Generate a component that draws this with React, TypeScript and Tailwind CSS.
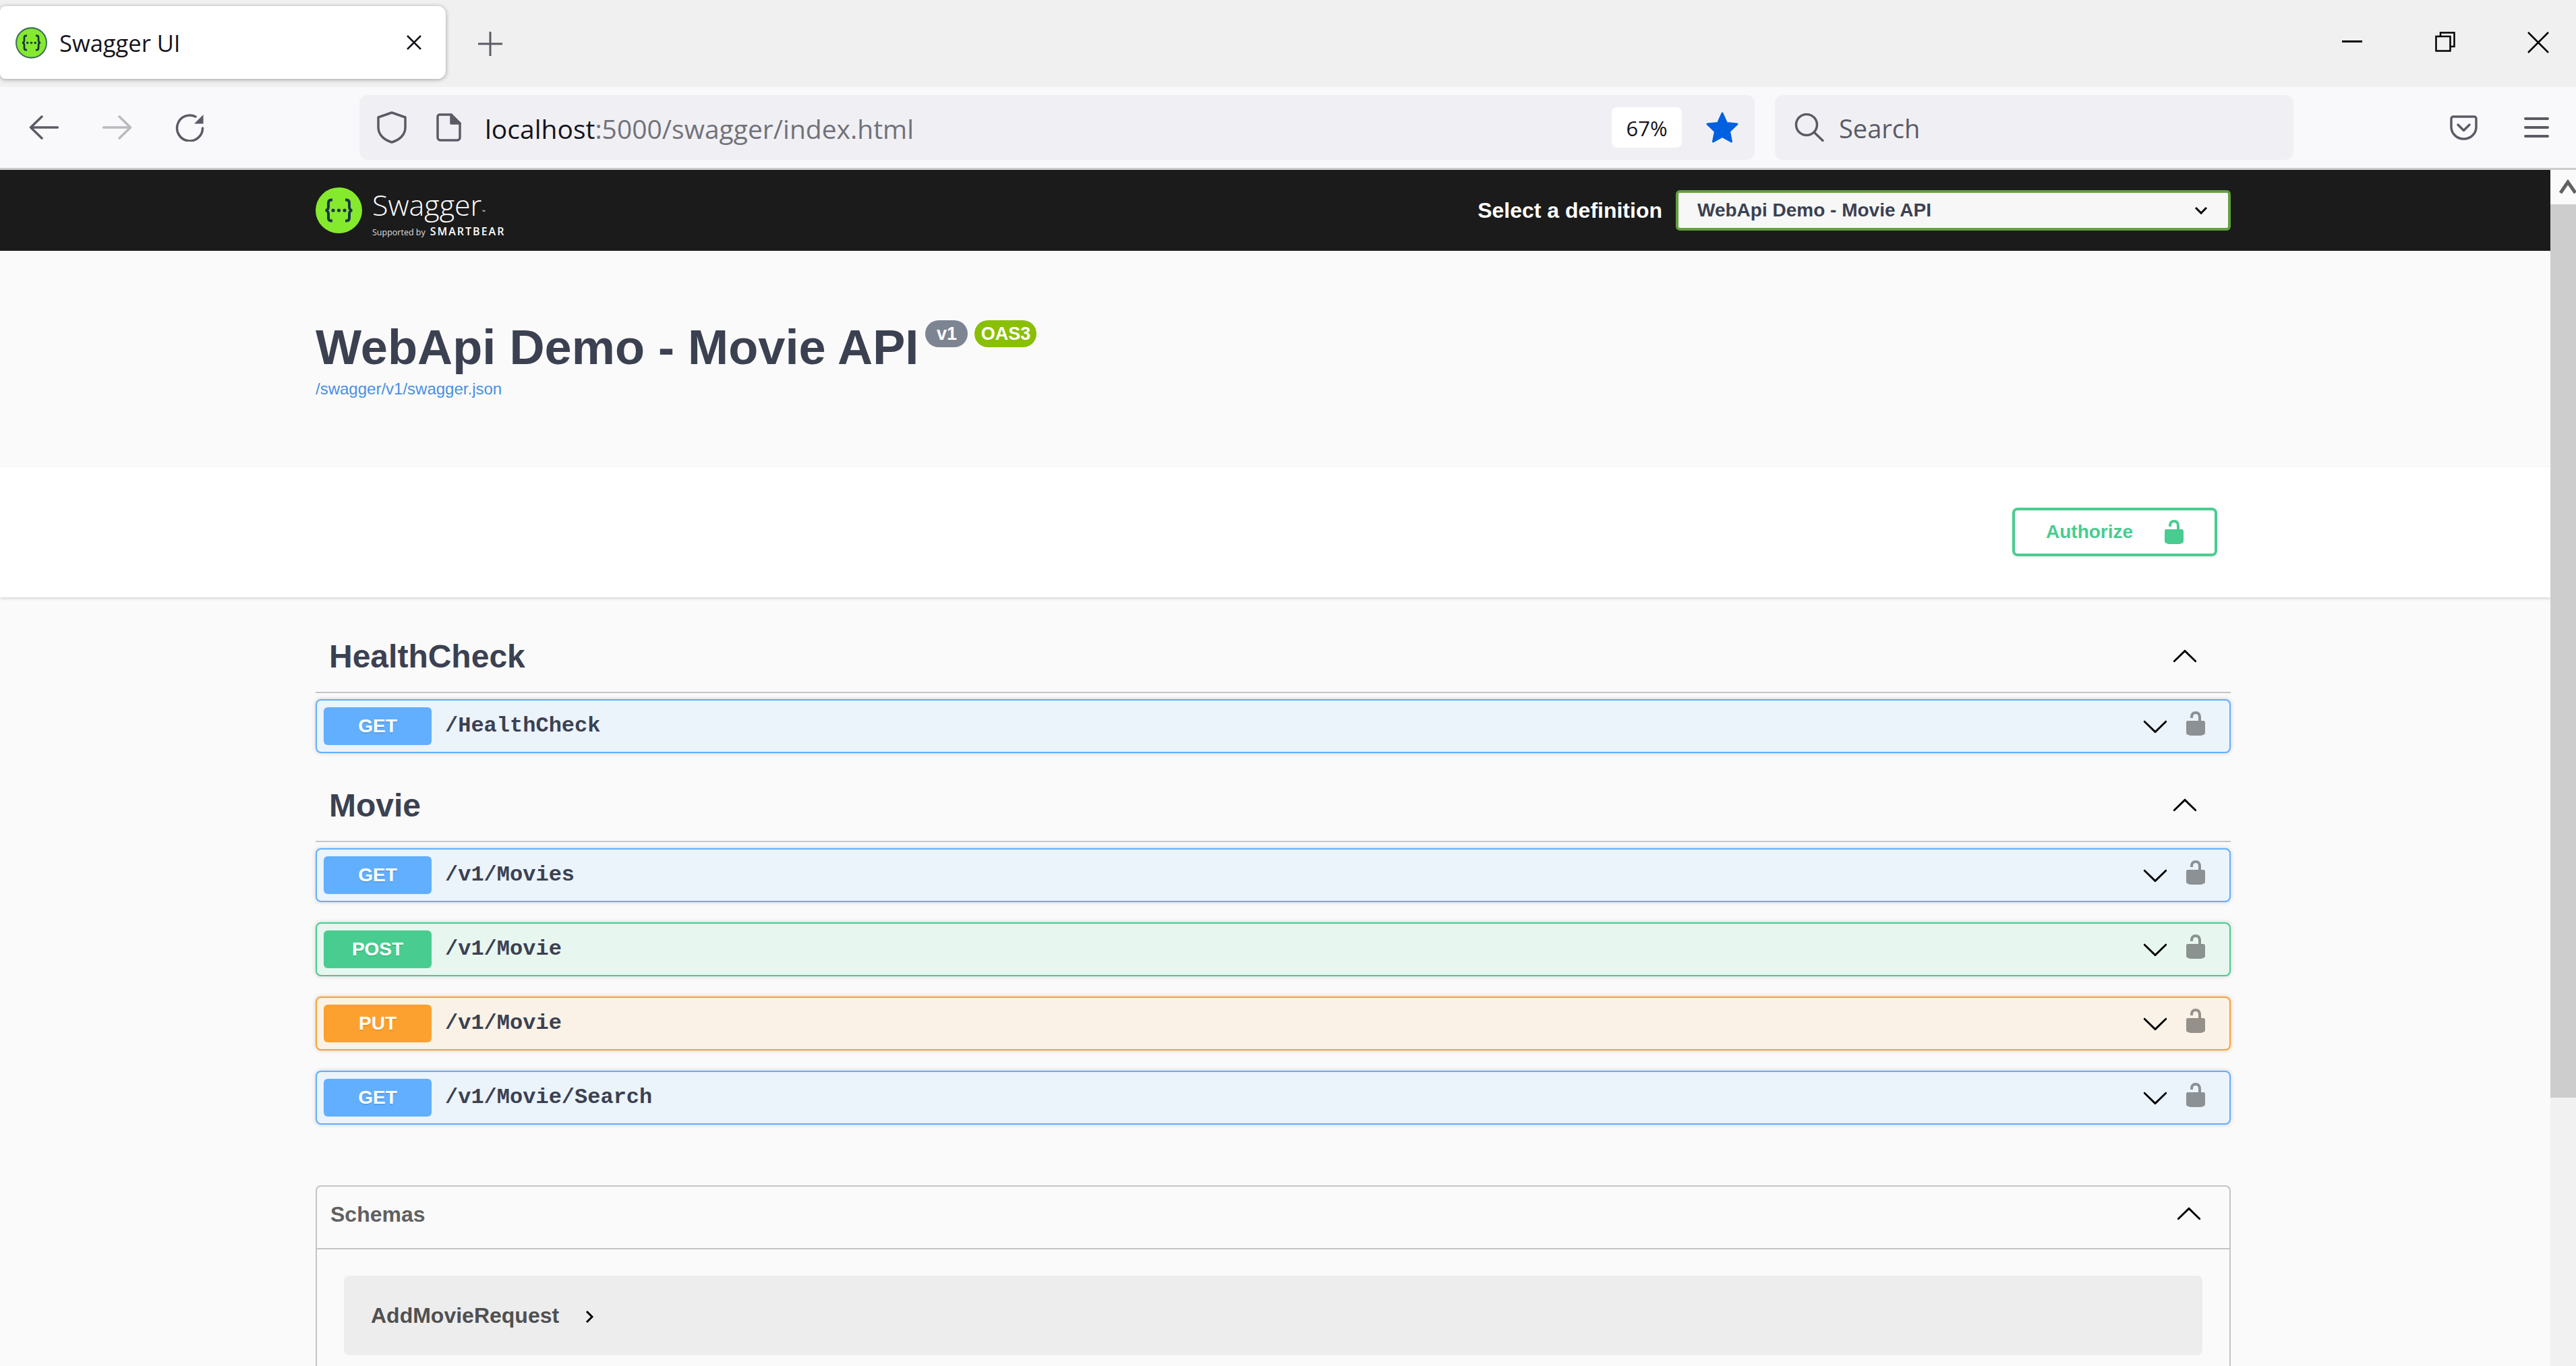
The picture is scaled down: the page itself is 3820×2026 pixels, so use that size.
import React from "react"

const LOCK_PATH =
  "M15.8 8H14V5.6C14 2.703 12.665 1 10 1 7.334 1 6 2.703 6 5.6V6h2v-.801C8 3.754 8.797 3 10 3c1.203 0 2 .754 2 2.199V8H4c-.553 0-1 .646-1 1.199V17c0 .549.428 1.139.951 1.307l1.197.387C5.672 18.861 6.55 19 7.1 19h5.8c.549 0 1.428-.139 1.951-.307l1.196-.387c.524-.167.953-.757.953-1.306V9.199C17 8.646 16.352 8 15.8 8z"
const ARROW_PATH =
  "M17.418 6.109c.272-.268.709-.268.979 0s.271.701 0 .969l-7.908 7.83c-.27.268-.707.268-.979 0l-7.908-7.83c-.27-.268-.27-.701 0-.969.271-.268.709-.268.979 0L10 13.25l7.418-7.141z"

type Method = "GET" | "POST" | "PUT"

const METHOD_STYLES: Record<Method, { row: string; badge: string }> = {
  GET: { row: "border-[#61affe] bg-[#ebf3fb]", badge: "bg-[#61affe]" },
  POST: { row: "border-[#49cc90] bg-[#e8f6f0]", badge: "bg-[#49cc90]" },
  PUT: { row: "border-[#fca130] bg-[#faf2e6]", badge: "bg-[#fca130]" },
}

function LockIcon({ className }: { className?: string }) {
  return (
    <svg viewBox="0 0 20 20" className={className} fill="currentColor">
      <path d={LOCK_PATH} />
    </svg>
  )
}

function Chevron({ up, className }: { up?: boolean; className?: string }) {
  return (
    <svg viewBox="0 0 20 20" className={className} fill="#000">
      <path d={ARROW_PATH} transform={up ? "rotate(180 10 10)" : undefined} />
    </svg>
  )
}

function SwaggerMark({ className, ring }: { className?: string; ring?: boolean }) {
  return (
    <svg viewBox="0 0 69 68" className={className}>
      <ellipse cx="34.5" cy="34" rx={ring ? 33 : 34.5} ry={ring ? 32.5 : 34} fill="#85ea2d" stroke={ring ? "#3f6f5c" : "none"} strokeWidth={ring ? 3 : 0} />
      <g fill="none" stroke="#173647" strokeWidth="4">
        <path d="M25 18.5h-2c-3 0-4 1.5-4 4.5v6c0 3-2 5-4.5 5 2.5 0 4.5 2 4.5 5v6c0 3 1 4.5 4 4.5h2" />
        <path d="M44 18.5h2c3 0 4 1.5 4 4.5v6c0 3 2 5 4.5 5-2.500 0-4.500 2-4.500 5v6c0 3-1 4.500-4 4.500h-2" />
      </g>
      <g fill="#173647">
        <circle cx="26" cy="34" r="2.6" />
        <circle cx="34.500" cy="34" r="2.6" />
        <circle cx="43" cy="34" r="2.6" />
      </g>
    </svg>
  )
}

function TabStrip() {
  return (
    <div className="flex h-[129px] items-start bg-[#f0f0f0]">
      <div className="mt-[9px] flex h-[108px] w-[661px] items-center rounded-r-[12px] rounded-l-[8px] bg-white pl-[23px] shadow-[0_1px_6px_rgba(0,0,0,0.35)]">
        <SwaggerMark ring className="h-[47px] w-[47px]" />
        <span className="ml-[18px] mt-[2px] font-['Open_Sans'] text-[34.500px] leading-none text-[#15141a]">Swagger UI</span>
        <svg viewBox="0 0 22 22" className="ml-auto mr-[36px] h-[22px] w-[22px]" stroke="#15141a" strokeWidth="2.5">
          <path d="M1 1l20 20M21 1L1 21" />
        </svg>
      </div>
      <svg viewBox="0 0 36 36" className="ml-[48px] mt-[47px] h-[36px] w-[36px]" stroke="#5b5b66" strokeWidth="3">
        <path d="M18 0v36M0 18h36" />
      </svg>
      <div className="ml-auto mr-[40px] mt-[47px] flex items-start">
        <div className="mt-[13px] h-[3px] w-[30px] bg-black" />
        <svg viewBox="0 0 30 30" className="ml-[108px] h-[30px] w-[30px]" fill="none" stroke="#000" strokeWidth="2.500">
          <path d="M8 7V1.500h20.500V22H23" />
          <rect x="1.500" y="7" width="21" height="21.500" />
        </svg>
        <svg viewBox="0 0 32 32" className="ml-[107px] h-[32px] w-[32px]" stroke="#000" strokeWidth="2.500">
          <path d="M1 1l30 30M31 1L1 31" />
        </svg>
      </div>
    </div>
  )
}

function Toolbar() {
  return (
    <div className="flex h-[123px] items-start border-b-[3px] border-[#cccccc] bg-[#f9f9fb] pt-[12px]">
      <div className="flex h-[96px] items-center pl-[43px]">
        <svg viewBox="0 0 44 36" className="h-[36px] w-[44px]" fill="none" stroke="#5b5b66" strokeWidth="3.500" strokeLinecap="round" strokeLinejoin="round">
          <path d="M19 2L2.500 18 19 34M3 18h39.500" />
        </svg>
        <svg viewBox="0 0 44 36" className="ml-[65px] h-[36px] w-[44px]" fill="none" stroke="#b9b9bf" strokeWidth="3.500" strokeLinecap="round" strokeLinejoin="round">
          <path d="M25 2l16.500 16L25 34M41 18H1.500" />
        </svg>
        <svg viewBox="0 0 44 42" className="ml-[63px] h-[42px] w-[44px]" fill="none" stroke="#5b5b66" strokeWidth="3.500" strokeLinecap="round">
          <path d="M31 5A19 19 0 1 0 41.500 22" />
          <path d="M42.500 2v13.500H29z" fill="#5b5b66" stroke="none" />
        </svg>
      </div>
      <div className="ml-[230px] flex h-[96px] w-[2069px] items-center rounded-[12px] bg-[#f0f0f4] pl-[26px]">
        <svg viewBox="0 0 44 48" className="h-[48px] w-[44px]" fill="none" stroke="#5b5b66" strokeWidth="3.500" strokeLinejoin="round">
          <path d="M22 2l20 7v15c0 12-10 19-20 22C12 43 2 36 2 24V9z" />
        </svg>
        <svg viewBox="0 0 37 42" className="ml-[44px] h-[42px] w-[37px]" fill="none" stroke="#5b5b66" strokeWidth="3.500" strokeLinejoin="round">
          <path d="M5 2h17l13 13v21a4 4 0 0 1-4 4H6a4 4 0 0 1-4-4V5a3 3 0 0 1 3-3z" />
          <path d="M22 2v13h13z" fill="#5b5b66" />
        </svg>
        <span className="ml-[35px] mt-[2px] font-['Open_Sans'] text-[39px] leading-none text-[#15141a]">
          localhost<span className="text-[#72727a]">:5000/swagger/index.html</span>
        </span>
        <div className="ml-auto flex h-[60px] w-[104px] items-center justify-center rounded-[8px] bg-white pt-[2px] font-['Open_Sans'] text-[31px] text-[#15141a]">
          67%
        </div>
        <svg viewBox="0 0 48 46" className="ml-[36px] mr-[24px] h-[46px] w-[48px]" fill="#0060df" stroke="#0060df" strokeWidth="3" strokeLinejoin="round">
          <path d="M24 2l6.500 14.500L46 18 34.500 29l3 15L24 36.500 10.500 44l3-15L2 18l15.500-1.500z" />
        </svg>
      </div>
      <div className="ml-[30px] flex h-[96px] w-[769px] items-center rounded-[12px] bg-[#f0f0f4] pl-[29px]">
        <svg viewBox="0 0 44 42" className="h-[42px] w-[44px]" fill="none" stroke="#5b5b66" strokeWidth="3.500" strokeLinecap="round">
          <circle cx="18" cy="17" r="15.500" />
          <path d="M29 28l13 12.500" />
        </svg>
        <span className="ml-[22px] mt-[2px] font-['Open_Sans'] text-[38px] leading-none text-[#5b5b66]">Search</span>
      </div>
      <div className="flex h-[96px] flex-1 items-center pl-[232px]">
        <svg viewBox="0 0 41 37" className="h-[37px] w-[41px]" fill="none" stroke="#5b5b66" strokeWidth="3.500" strokeLinecap="round" strokeLinejoin="round">
          <path d="M5 2h31a3 3 0 0 1 3 3v12c0 11-9 18-18.500 18S2 28 2 17V5a3 3 0 0 1 3-3z" />
          <path d="M12 14l8.500 8.500L29 14" />
        </svg>
        <div className="ml-[69px] flex w-[37px] flex-col gap-[9px]">
          <div className="h-[4px] rounded-full bg-[#5b5b66]" />
          <div className="h-[4px] rounded-full bg-[#5b5b66]" />
          <div className="h-[4px] rounded-full bg-[#5b5b66]" />
        </div>
      </div>
    </div>
  )
}

function SwaggerHeader() {
  return (
    <div className="flex h-[120px] items-center bg-[#1b1b1b] pl-[468px]">
      <SwaggerMark className="h-[68px] w-[69px]" />
      <div className="ml-[15px] mt-[12px] flex flex-col font-['Open_Sans'] text-white">
        <div className="flex items-end">
          <span className="text-[43px] font-light leading-[46px]">Swagger</span>
          <span className="mb-[10px] ml-[1px] text-[6px] leading-none">™</span>
        </div>
        <div className="mt-[8px] flex h-[20px] items-baseline">
          <span className="text-[12.500px] leading-none text-[#dddddd]">Supported by</span>
          <span className="ml-[7px] text-[16px] font-semibold leading-none tracking-[2px]">SMARTBEAR</span>
        </div>
      </div>
      <span className="ml-auto text-[32px] font-bold text-white">Select a definition</span>
      <div className="ml-[20px] mr-[512px] flex h-[60px] w-[823px] items-center rounded-[6px] border-[4px] border-[#62a03f] bg-[#f7f7f7] pl-[28px] pr-[30px]">
        <span className="text-[28px] font-bold text-[#3b4151]">WebApi Demo - Movie API</span>
        <svg viewBox="0 0 20 12" className="ml-auto h-[12px] w-[20px]" fill="none" stroke="#000" strokeWidth="3">
          <path d="M2 2l8 8 8-8" />
        </svg>
      </div>
    </div>
  )
}

function Operation({ method, path }: { method: Method; path: string }) {
  const styles = METHOD_STYLES[method]
  return (
    <div className={`flex h-[80px] items-center rounded-[8px] border-[2px] pl-[10px] pr-[30px] shadow-[0_0_6px_rgba(0,0,0,0.19)] ${styles.row}`}>
      <div className={`flex h-[56px] w-[160px] items-center justify-center rounded-[6px] text-[28px] font-bold text-white [text-shadow:0_2px_0_rgba(0,0,0,0.1)] ${styles.badge}`}>
        {method}
      </div>
      <span className="ml-[20px] font-['Liberation_Mono'] text-[32px] font-bold text-[#3b4151]">{path}</span>
      <Chevron className="ml-auto h-[40px] w-[40px]" />
      <LockIcon className="mb-[8px] ml-[20px] h-[40px] w-[40px] text-black opacity-40" />
    </div>
  )
}

function Tag({ name, children }: { name: string; children: React.ReactNode }) {
  return (
    <section>
      <div className="flex h-[106px] items-center border-b-[2px] border-[#c4c5c9] pl-[20px] pr-[48px]">
        <h3 className="text-[48px] font-bold text-[#3b4151]">{name}</h3>
        <Chevron up className="ml-auto h-[40px] w-[40px]" />
      </div>
      <div className="flex flex-col gap-[30px] pt-[9px]">{children}</div>
    </section>
  )
}

function Schemas() {
  return (
    <section className="mt-[90px] rounded-t-[8px] border-[2px] border-b-0 border-[#c4c4c4] pb-[40px]">
      <div className="flex h-[93px] items-center border-b-[2px] border-[#c4c4c4] pb-[10px] pl-[20px] pr-[40px]">
        <h4 className="text-[32px] font-bold text-[#606060]">Schemas</h4>
        <Chevron up className="ml-auto h-[40px] w-[40px]" />
      </div>
      <div className="px-[40px] pt-[39px]">
        <div className="flex h-[118px] items-center rounded-[8px] bg-[#ededed] pl-[40px]">
          <span className="text-[32px] font-bold text-[#505050]">AddMovieRequest</span>
          <svg viewBox="0 0 14 20" className="ml-[38px] mt-[4px] h-[20px] w-[14px]" fill="none" stroke="#000" strokeWidth="3">
            <path d="M3 2l8 8-8 8" />
          </svg>
        </div>
      </div>
    </section>
  )
}

export default function App() {
  return (
    <div className="flex h-screen flex-col overflow-hidden bg-[#fafafa] font-['Liberation_Sans',sans-serif]">
      <TabStrip />
      <Toolbar />
      <div className="relative flex-1 overflow-hidden">
        <SwaggerHeader />
        <div className="w-[3782px]">
          <div className="h-[321px] pl-[468px] pt-[103px]">
            <div className="flex items-start">
              <h2 className="mt-[4px] text-[72.200px] font-bold leading-[72px] text-[#3b4151]">WebApi Demo - Movie API</h2>
              <span className="ml-[10px] flex h-[40px] w-[63px] items-center justify-center rounded-full bg-[#7d8492] text-[27px] font-bold text-white">v1</span>
              <span className="ml-[10px] flex h-[40px] w-[92px] items-center justify-center rounded-full bg-[#89bf04] text-[27px] font-bold text-white">OAS3</span>
            </div>
            <a className="mt-[12px] block text-[24px] leading-[28px] text-[#4990e2]">/swagger/v1/swagger.json</a>
          </div>
          <div className="relative h-[193px] bg-white pt-[60px] shadow-[0_2px_4px_rgba(0,0,0,0.15)]">
            <div className="ml-[2984px] flex h-[72px] w-[304px] items-center rounded-[8px] border-[4px] border-[#49cc90] pl-[46px] shadow-[0_1px_4px_rgba(0,0,0,0.1)]">
              <span className="text-[28px] font-bold text-[#49cc90]">Authorize</span>
              <LockIcon className="ml-[41px] h-[40px] w-[40px] text-[#49cc90]" />
            </div>
          </div>
          <div className="mx-[468px] w-[2840px] pt-[36px]">
            <Tag name="HealthCheck">
              <Operation method="GET" path="/HealthCheck" />
            </Tag>
            <div className="h-[26px]" />
            <Tag name="Movie">
              <Operation method="GET" path="/v1/Movies" />
              <Operation method="POST" path="/v1/Movie" />
              <Operation method="PUT" path="/v1/Movie" />
              <Operation method="GET" path="/v1/Movie/Search" />
            </Tag>
            <Schemas />
          </div>
        </div>
        {/* browser scrollbar sits on top of the page header */}
        <div className="absolute bottom-0 right-0 top-0 flex w-[38px] flex-col bg-[#f1f1f1]">
          <div className="h-[51px] bg-[#fafafa] pl-[13px] pt-[14px]">
            <svg viewBox="0 0 26 22" className="h-[22px] w-[26px]" fill="none" stroke="#606060" strokeWidth="5">
              <path d="M2 20L13 4l11 16" />
            </svg>
          </div>
          <div className="h-[1325px] bg-[#cdcdcd]" />
        </div>
      </div>
    </div>
  )
}
